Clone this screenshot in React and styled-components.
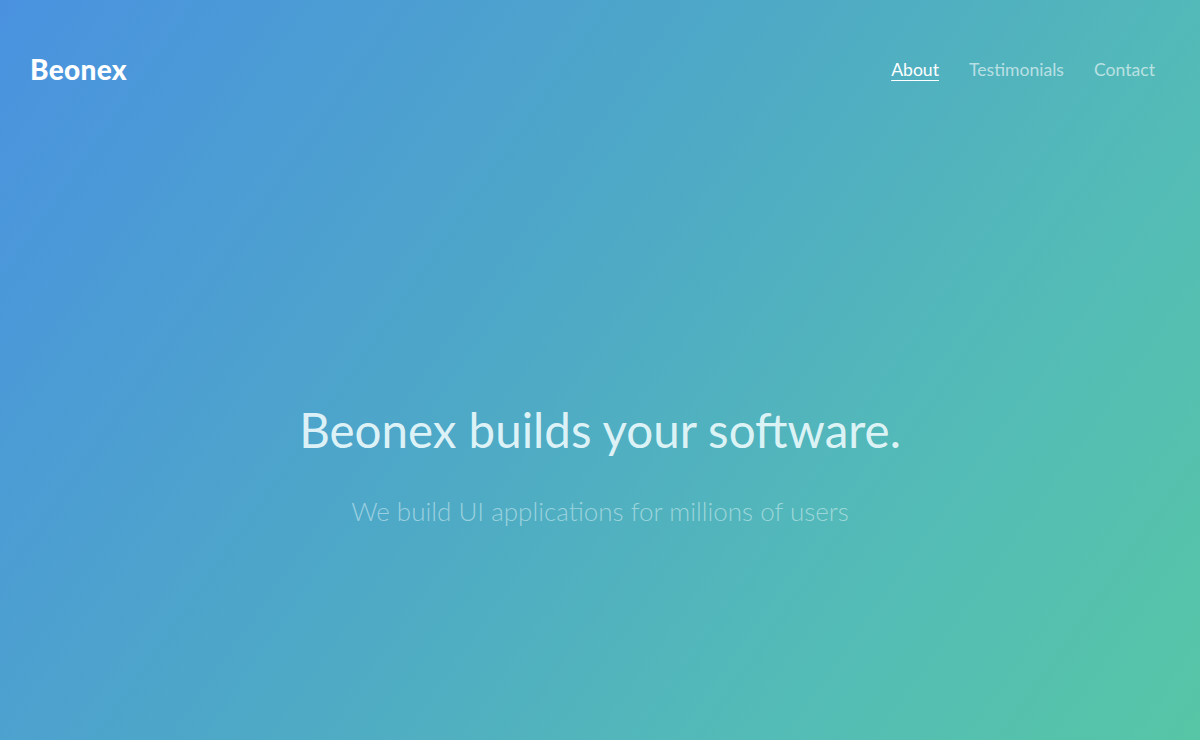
import React from 'react'
import styled, { createGlobalStyle } from 'styled-components'

const GlobalStyle = createGlobalStyle`
  html, body {
    margin: 0;
    padding: 0;
    height: 100%;
  }
  body {
    font-family: Lato, "Open Sans", sans-serif;
  }
  #root {
    height: 100%;
  }
`

const Page = styled.div`
  height: 740px;
  display: flex;
  flex-direction: column;
  background: linear-gradient(125deg, #4a92e0 0%, #4ea9c6 45%, #54bcb6 75%, #56c6a6 100%);
  overflow: hidden;
`

const Header = styled.header`
  height: 138px;
  display: flex;
  align-items: center;
  justify-content: space-between;
  padding: 0 45px 0 30px;
  box-sizing: border-box;
`

const Logo = styled.a`
  font-family: Lato, sans-serif;
  font-weight: 900;
  font-size: 28px;
  color: #fff;
  text-decoration: none;
  letter-spacing: 0.3px;
`

const Nav = styled.nav`
  display: flex;
  gap: 30px;
`

const NavLink = styled.a`
  font-size: 17.6px;
  color: ${p => (p.active ? '#fff' : 'rgba(255, 255, 255, 0.6)')};
  text-decoration: ${p => (p.active ? 'underline' : 'none')};
  text-underline-offset: 4px;
  text-decoration-thickness: 1px;
  cursor: pointer;
`

const Hero = styled.section`
  flex: 1;
  display: flex;
  flex-direction: column;
  align-items: center;
  padding-top: 262px;
  box-sizing: border-box;
`

const Title = styled.h1`
  margin: 0;
  font-weight: 400;
  font-size: 47.5px;
  line-height: 60px;
  color: rgba(235, 250, 252, 0.92);
`

const Subtitle = styled.p`
  margin: 35px 0 0;
  font-weight: 300;
  font-size: 26px;
  line-height: 32px;
  color: rgba(220, 242, 246, 0.55);
`

export default function App() {
  return (
    <>
      <GlobalStyle />
      <Page>
        <Header>
          <Logo>Beonex</Logo>
          <Nav>
            <NavLink active>About</NavLink>
            <NavLink>Testimonials</NavLink>
            <NavLink>Contact</NavLink>
          </Nav>
        </Header>
        <Hero>
          <Title>Beonex builds your software.</Title>
          <Subtitle>We build UI applications for millions of users</Subtitle>
        </Hero>
      </Page>
    </>
  )
}
